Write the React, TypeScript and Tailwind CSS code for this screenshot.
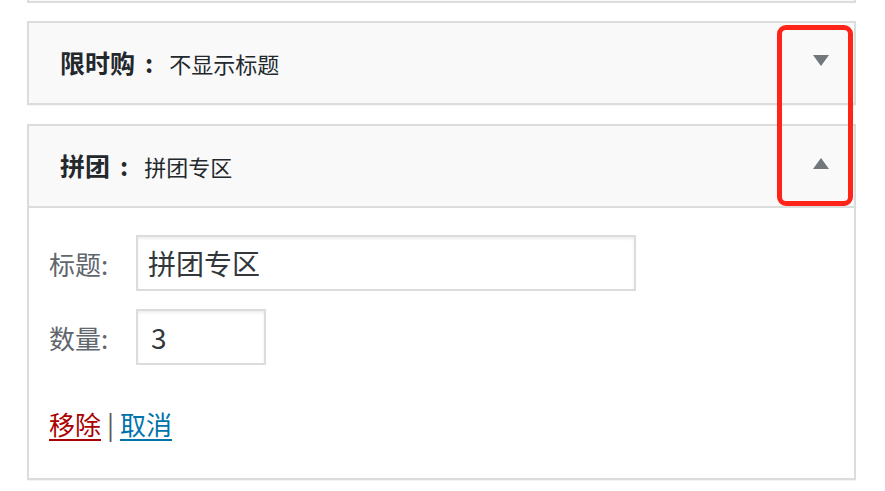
import React from "react";

const font = { fontFamily: '"Noto Sans CJK SC", "Open Sans", sans-serif' };

function Arrow({ up }: { up?: boolean }) {
  return (
    <svg width="16" height="11" viewBox="0 0 16 11" className="shrink-0">
      <polygon
        points={up ? "8,0 16,11 0,11" : "0,0 16,0 8,11"}
        fill="#72777c"
      />
    </svg>
  );
}

function WidgetHeader({ title, sub, up }: { title: string; sub: string; up?: boolean }) {
  return (
    <div className="flex h-[80px] items-center justify-between bg-[#f9f9f9] pl-[31px] pr-[25px]">
      <div className="flex items-baseline text-[#23282d]">
        <span className="text-[25px] font-bold">{title}</span>
        <span className="ml-[10px] text-[25px] font-bold">:</span>
        <span className="ml-[16px] text-[22px]">{sub}</span>
      </div>
      <div className={up ? "mt-[-6px]" : "mt-[-6px]"}>
        <Arrow up={up} />
      </div>
    </div>
  );
}

export default function App() {
  return (
    <div className="relative h-[491px] w-[885px] overflow-hidden bg-white" style={font}>
      <div className="ml-[27px] w-[829px]">
        <div className="h-[3px] border-x-2 border-b-2 border-[#dcdcdc] bg-[#f9f9f9]" />

        <div className="mt-[18px] border-2 border-[#dcdcdc] shadow-[0_1px_1px_rgba(0,0,0,0.04)]">
          <WidgetHeader title="限时购" sub="不显示标题" />
        </div>

        <div className="mt-[19px] border-2 border-[#dcdcdc] shadow-[0_1px_1px_rgba(0,0,0,0.04)]">
          <div className="border-b-2 border-[#dcdcdc]">
            <WidgetHeader title="拼团" sub="拼团专区" up />
          </div>
          <div className="bg-white pl-[20px] pt-[27px] pb-[36px]">
            <div className="flex items-center">
              <span className="w-[87px] text-[26px] text-[#60666c]">标题:</span>
              <div className="flex h-[56px] w-[500px] items-center border-2 border-[#dcdcdc] pl-[10px] text-[28px] text-[#32373c] shadow-[inset_0_2px_3px_rgba(0,0,0,0.07)]">
                拼团专区
              </div>
            </div>
            <div className="mt-[18px] flex items-center">
              <span className="w-[87px] text-[26px] text-[#60666c]">数量:</span>
              <div className="flex h-[56px] w-[130px] items-center border-2 border-[#dcdcdc] pl-[13px] text-[28px] text-[#32373c] shadow-[inset_0_2px_3px_rgba(0,0,0,0.07)]">
                3
              </div>
            </div>
            <div className="mt-[41px] flex items-center text-[26px] leading-[36px]">
              <a className="text-[#a00] underline underline-offset-[4px]">移除</a>
              <span className="mx-[6px] text-[#555]">|</span>
              <a className="text-[#0073aa] underline underline-offset-[4px]">取消</a>
            </div>
          </div>
        </div>
      </div>

      <div className="absolute left-[777px] top-[25px] h-[181px] w-[76px] rounded-[9px] border-[5px] border-[#ff2318]" />
    </div>
  );
}
